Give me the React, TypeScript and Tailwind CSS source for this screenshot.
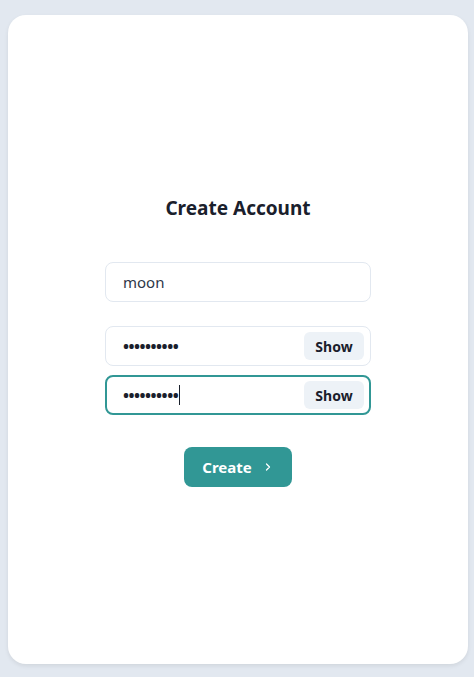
import React from "react";

function Field({ children, focused }: { children: React.ReactNode; focused?: boolean }) {
  return (
    <div
      className={
        focused
          ? "flex h-[40px] w-[266px] items-center rounded-[8px] border-2 border-[#319795] pl-[16px] pr-[5px]"
          : "flex h-[40px] w-[266px] items-center rounded-[8px] border border-[#e2e8f0] pl-[17px] pr-[6px]"
      }
    >
      {children}
    </div>
  );
}

function Dots({ caret }: { caret?: boolean }) {
  return (
    <div className="flex flex-1 items-center">
      <span className="text-[16px] font-bold tracking-[-0.5px] text-[#1a202c]">••••••••••</span>
      {caret && <span className="ml-[1px] h-[20px] w-[1px] bg-[#1a202c]" />}
    </div>
  );
}

function ShowBtn() {
  return (
    <div className="flex h-[28px] w-[60px] items-center justify-center rounded-[6px] bg-[#edf2f7] text-[14px] font-bold text-[#1a202c]">
      Show
    </div>
  );
}

export default function App() {
  return (
    <div
      className="min-h-[677px] w-full bg-[#e2e8f0] pt-[15px] pl-[8px] pr-[6px] pb-[13px]"
      style={{ fontFamily: '"Noto Sans", "Open Sans", sans-serif' }}
    >
      <div className="flex h-[649px] flex-col items-center justify-center rounded-[18px] bg-white pt-[2px] shadow-[0_2px_4px_rgba(0,0,0,0.08)]">
        <h1 className="mb-[40px] h-[28px] text-[19px] leading-[28px] font-bold text-[#1a202c]">
          Create Account
        </h1>
        <Field>
          <span className="text-[15px] text-[#2d3748]">moon</span>
        </Field>
        <div className="mt-[24px] flex flex-col gap-[9px]">
          <Field>
            <Dots />
            <ShowBtn />
          </Field>
          <Field focused>
            <Dots caret />
            <ShowBtn />
          </Field>
        </div>
        <button className="mt-[32px] flex h-[40px] w-[108px] items-center justify-center gap-[10px] rounded-[8px] bg-[#319795] text-[15px] font-bold text-white">
          <span>Create</span>
          <svg width="12" height="12" viewBox="0 0 24 24" fill="none" stroke="white" strokeWidth="2.5" strokeLinecap="round" strokeLinejoin="round">
            <path d="M9 6l6 6-6 6" />
          </svg>
        </button>
      </div>
    </div>
  );
}
